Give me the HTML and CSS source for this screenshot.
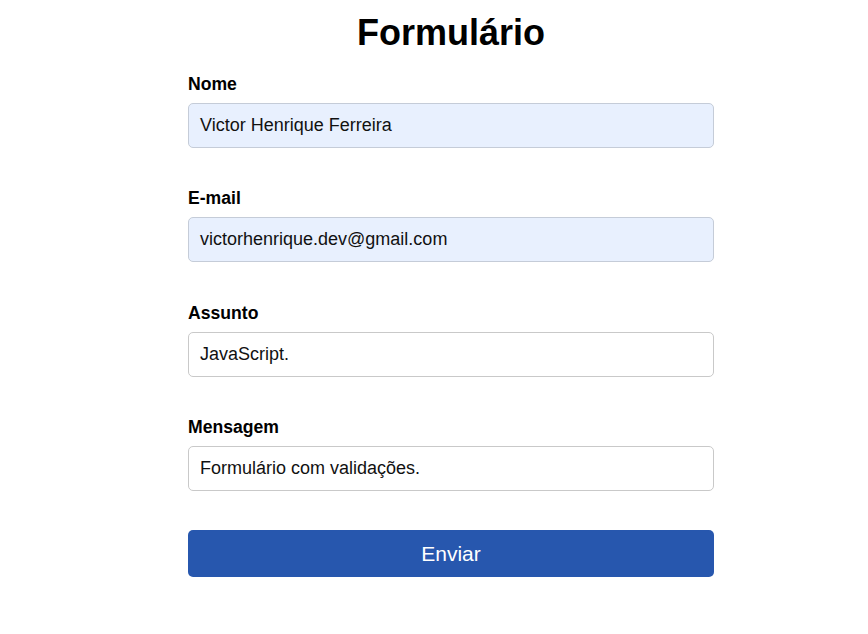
FILE: index.html
```html
<!DOCTYPE html>
<html lang="pt-BR">
<head>
<meta charset="utf-8">
<title>Formulário</title>
<link rel="stylesheet" href="styles.css">
</head>
<body>
<div class="container">
  <h1 class="title">Formulário</h1>
  <form class="form">
    <div class="field">
      <label class="label" for="nome">Nome</label>
      <div class="input autofill" id="nome">Victor Henrique Ferreira</div>
    </div>
    <div class="field">
      <label class="label" for="email">E-mail</label>
      <div class="input autofill" id="email">victorhenrique.dev@gmail.com</div>
    </div>
    <div class="field">
      <label class="label" for="assunto">Assunto</label>
      <div class="input" id="assunto">JavaScript.</div>
    </div>
    <div class="field">
      <label class="label" for="mensagem">Mensagem</label>
      <div class="input" id="mensagem">Formulário com validações.</div>
    </div>
    <button type="button" class="button">Enviar</button>
  </form>
</div>
</body>
</html>
```
FILE: styles.css
```css
* { box-sizing: border-box; }
html, body { margin: 0; padding: 0; background: #fff; }
body {
  font-family: "Liberation Sans", Arial, sans-serif;
  color: #000;
  padding-top: 12px;
}
.container {
  width: 526px;
  margin-left: 188px;
}
.title {
  margin: 0;
  font-size: 36px;
  line-height: 41px;
  font-weight: 700;
  text-align: center;
}
.form {
  display: flex;
  flex-direction: column;
  gap: 39.33px;
  margin-top: 20px;
}
.field {
  display: flex;
  flex-direction: column;
  gap: 8px;
}
.label {
  font-size: 17.6px;
  line-height: 22px;
  font-weight: 700;
}
.input {
  height: 45px;
  border: 1px solid #c9c9c9;
  border-radius: 5px;
  padding: 0 11px;
  font-size: 18px;
  display: flex;
  align-items: center;
  color: #111;
  background: #fff;
}
.input.autofill {
  background: #e8f0fe;
  border-color: #c5ccd8;
}
.button {
  height: 47px;
  border: none;
  border-radius: 5px;
  background: #2757ae;
  color: #fff;
  font-family: "Liberation Sans", Arial, sans-serif;
  font-size: 21px;
  cursor: pointer;
}
```
